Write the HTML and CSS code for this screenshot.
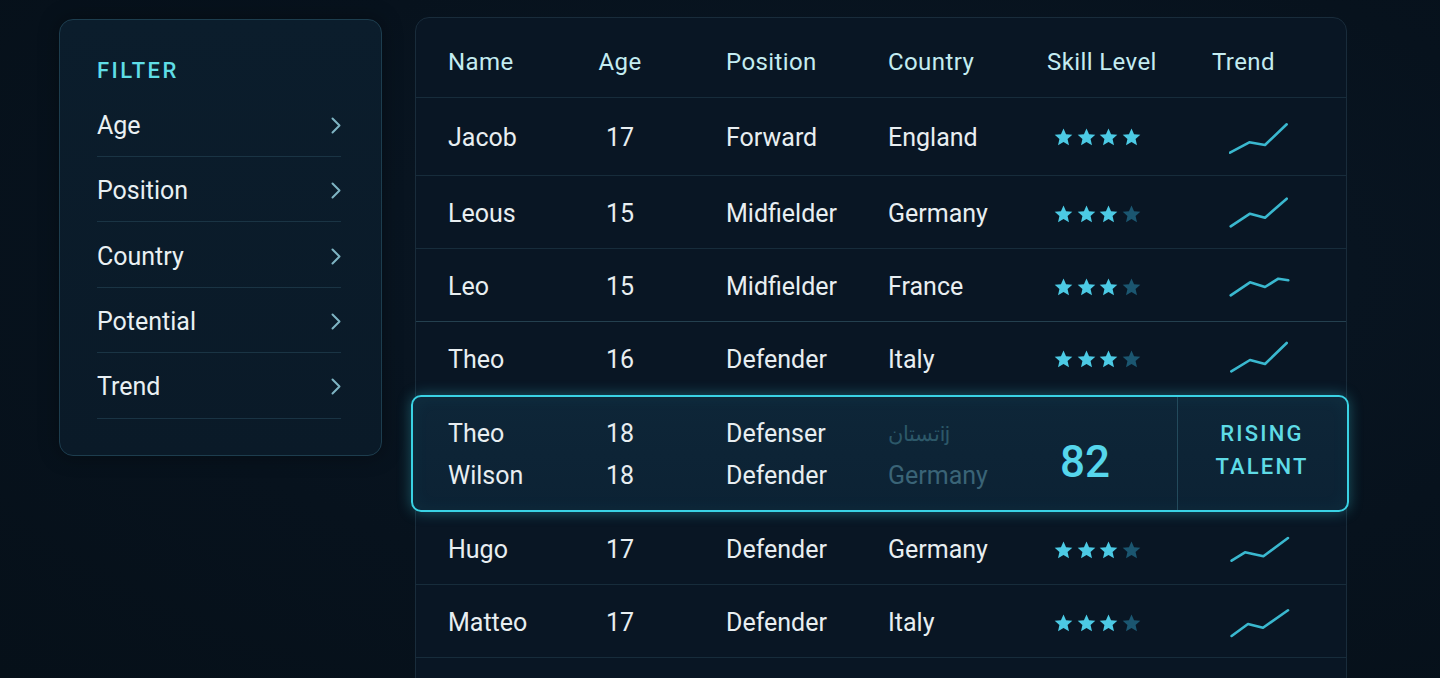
FILE: index.html
```html
<!DOCTYPE html>
<html lang="en">
<head>
<meta charset="utf-8">
<title>Scouting Table</title>
<link rel="stylesheet" href="styles.css">
</head>
<body>
<svg width="0" height="0" class="defs" aria-hidden="true">
  <defs>
    <symbol id="star" viewBox="0 0 20 19">
      <polygon points="10,0.5 12.7,6.6 19.3,7.1 14.3,11.5 15.8,18.2 10,14.7 4.2,18.2 5.7,11.5 0.7,7.1 7.3,6.6"/>
    </symbol>
    <symbol id="chev" viewBox="0 0 10 17">
      <polyline points="1.5,1.5 8.5,8.5 1.5,15.5" fill="none" stroke="currentColor" stroke-width="2" stroke-linecap="round" stroke-linejoin="round"/>
    </symbol>
  </defs>
</svg>
<div class="page">
  <aside class="filter">
    <h2 class="filter-title">FILTER</h2>
    <ul class="filter-list">
      <li class="filter-item"><span>Age</span><svg class="chev"><use href="#chev"/></svg></li>
      <li class="filter-item"><span>Position</span><svg class="chev"><use href="#chev"/></svg></li>
      <li class="filter-item"><span>Country</span><svg class="chev"><use href="#chev"/></svg></li>
      <li class="filter-item"><span>Potential</span><svg class="chev"><use href="#chev"/></svg></li>
      <li class="filter-item"><span>Trend</span><svg class="chev"><use href="#chev"/></svg></li>
    </ul>
  </aside>

  <section class="table">
    <div class="row head">
      <div class="c-name">Name</div>
      <div class="c-age">Age</div>
      <div class="c-pos">Position</div>
      <div class="c-country">Country</div>
      <div class="c-skill">Skill Level</div>
      <div class="c-trend">Trend</div>
    </div>

    <div class="row first">
      <div class="c-name">Jacob</div>
      <div class="c-age">17</div>
      <div class="c-pos">Forward</div>
      <div class="c-country">England</div>
      <div class="c-skill stars"><svg class="star on"><use href="#star"/></svg><svg class="star on"><use href="#star"/></svg><svg class="star on"><use href="#star"/></svg><svg class="star on"><use href="#star"/></svg></div>
      <div class="c-trend"><svg class="spark" viewBox="0 0 62 36"><polyline points="1,33.7 20.3,23.3 36,26 57.7,5.3"/></svg></div>
    </div>

    <div class="row">
      <div class="c-name">Leous</div>
      <div class="c-age">15</div>
      <div class="c-pos">Midfielder</div>
      <div class="c-country">Germany</div>
      <div class="c-skill stars"><svg class="star on"><use href="#star"/></svg><svg class="star on"><use href="#star"/></svg><svg class="star on"><use href="#star"/></svg><svg class="star off"><use href="#star"/></svg></div>
      <div class="c-trend"><svg class="spark" viewBox="0 0 62 36"><polyline points="1.7,30.3 21,17.7 36,21.7 57.7,2.7"/></svg></div>
    </div>

    <div class="row bright-line">
      <div class="c-name">Leo</div>
      <div class="c-age">15</div>
      <div class="c-pos">Midfielder</div>
      <div class="c-country">France</div>
      <div class="c-skill stars"><svg class="star on"><use href="#star"/></svg><svg class="star on"><use href="#star"/></svg><svg class="star on"><use href="#star"/></svg><svg class="star off"><use href="#star"/></svg></div>
      <div class="c-trend"><svg class="spark" viewBox="0 0 62 36"><polyline points="1.7,26.3 21,13.3 36,18 49.3,9.7 59.3,11.3"/></svg></div>
    </div>

    <div class="row no-line">
      <div class="c-name">Theo</div>
      <div class="c-age">16</div>
      <div class="c-pos">Defender</div>
      <div class="c-country">Italy</div>
      <div class="c-skill stars"><svg class="star on"><use href="#star"/></svg><svg class="star on"><use href="#star"/></svg><svg class="star on"><use href="#star"/></svg><svg class="star off"><use href="#star"/></svg></div>
      <div class="c-trend"><svg class="spark" viewBox="0 0 62 36"><polyline points="2.3,30.3 21,19 36,23 57.7,2"/></svg></div>
    </div>

    <div class="row highlight">
      <div class="c-name stack"><span>Theo</span><span>Wilson</span></div>
      <div class="c-age stack"><span>18</span><span>18</span></div>
      <div class="c-pos stack"><span>Defenser</span><span>Defender</span></div>
      <div class="c-country stack dim"><span class="garble">تستانij</span><span>Germany</span></div>
      <div class="c-skill score">82</div>
      <div class="c-trend badge"><span>RISING</span><span>TALENT</span></div>
    </div>

    <div class="row">
      <div class="c-name">Hugo</div>
      <div class="c-age">17</div>
      <div class="c-pos">Defender</div>
      <div class="c-country">Germany</div>
      <div class="c-skill stars"><svg class="star on"><use href="#star"/></svg><svg class="star on"><use href="#star"/></svg><svg class="star on"><use href="#star"/></svg><svg class="star off"><use href="#star"/></svg></div>
      <div class="c-trend"><svg class="spark" viewBox="0 0 62 36"><polyline points="2.6,28.7 16,20.3 34.4,24.3 59,6"/></svg></div>
    </div>

    <div class="row">
      <div class="c-name">Matteo</div>
      <div class="c-age">17</div>
      <div class="c-pos">Defender</div>
      <div class="c-country">Italy</div>
      <div class="c-skill stars"><svg class="star on"><use href="#star"/></svg><svg class="star on"><use href="#star"/></svg><svg class="star on"><use href="#star"/></svg><svg class="star off"><use href="#star"/></svg></div>
      <div class="c-trend"><svg class="spark" viewBox="0 0 62 36"><polyline points="2.6,31 19,19 34,22.7 59,5.3"/></svg></div>
    </div>

    <div class="row empty"></div>
  </section>
</div>
</body>
</html>
```

FILE: styles.css
```css
* { box-sizing: border-box; }

html, body {
  margin: 0;
  height: 100%;
  overflow: hidden;
}

body {
  background: radial-gradient(ellipse at 60% 40%, #0a1826 0%, #07121d 60%, #061019 100%);
  font-family: Roboto, "Liberation Sans", sans-serif;
  color: #e6eef2;
}

.defs { position: absolute; }

.page {
  display: flex;
  align-items: flex-start;
  gap: 33px;
  padding: 17px 0 0 59px;
}

/* Filter panel */
.filter {
  width: 323px;
  height: 437px;
  margin-top: 2px;
  border: 1.5px solid #1d3d4e;
  border-radius: 14px;
  background: linear-gradient(180deg, #0b1d2c 0%, #0a1a28 100%);
  padding: 37px 40px 0 37px;
  box-shadow: 0 0 20px rgba(0, 0, 0, 0.35);
}

.filter-title {
  margin: 0;
  font-size: 22px;
  line-height: 28px;
  font-weight: 500;
  letter-spacing: 2.4px;
  color: #5fdde6;
}

.filter-list {
  list-style: none;
  margin: 6px 0 0;
  padding: 0;
}

.filter-item {
  display: flex;
  align-items: center;
  justify-content: space-between;
  height: 65.6px;
  padding-top: 4px;
  border-bottom: 1px solid #1a3444;
  font-size: 25px;
  color: #e9f0f3;
}

.filter-item:nth-child(n+4) { padding-top: 2px; }

.chev {
  width: 10px;
  height: 17px;
  color: #7eb4c3;
}

/* Table */
.table {
  width: 932px;
  height: 720px;
  border: 1px solid #192c3b;
  border-radius: 14px;
  background: #091624;
}

.row {
  display: grid;
  grid-template-columns: 112px 120px 208px 159px 130px 1fr;
  align-items: center;
  height: 73px;
  padding-left: 32px;
  padding-top: 3px;
  border-bottom: 1px solid #172c3b;
  font-size: 25px;
  color: #e8eef1;
}

.row.head {
  height: 80px;
  padding-top: 30px;
  padding-bottom: 21px;
  align-items: center;
  font-size: 24px;
  letter-spacing: 0.4px;
  color: #c4ecf1;
}

.row.first { height: 78px; padding-top: 1px; }
.row.bright-line { border-bottom-color: #24404f; }
.row.no-line { border-bottom-color: transparent; padding-top: 2px; }

.c-age { text-align: center; }
.c-pos { padding-left: 46px; }
.stars {
  padding-left: 7px;
  display: flex;
  gap: 3.5px;
}
.head .c-skill { padding-left: 0; }
.head .c-trend { padding-left: 35px; }

.star { width: 19px; height: 18px; }
.star.on { fill: #4ccae4; }
.star.off { fill: #1b5670; }

.c-trend { padding-left: 52px; display: flex; }
.spark {
  width: 62px;
  height: 36px;
  fill: none;
  stroke: #3ab8cf;
  stroke-width: 2.6;
  stroke-linecap: round;
  stroke-linejoin: round;
}

/* highlighted row */
.row.highlight {
  height: 117px;
  margin: 0 -3px 0 -5px;
  padding-left: 35px;
  padding-top: 3px;
  border: 2px solid #3ad2e4;
  border-radius: 10px;
  background: linear-gradient(180deg, #0e2638 0%, #0c2234 100%);
  box-shadow: 0 0 14px rgba(58, 210, 228, 0.35), inset 0 0 18px rgba(58, 210, 228, 0.06);
  align-items: stretch;
}

.stack {
  display: flex;
  flex-direction: column;
  justify-content: center;
  line-height: 42px;
}

.dim { color: #3a6477; }
.garble {
  font-size: 21px;
  color: #2c5869;
  line-height: 42px;
}

.score {
  display: flex;
  align-items: center;
  padding-left: 13px;
  padding-top: 13px;
  font-size: 44px;
  font-weight: 500;
  color: #56d6ec;
}

.badge {
  border-left: 1px solid #234a5c;
  margin-top: -3px;
  padding: 0 0 7px;
  display: flex;
  flex-direction: column;
  align-items: center;
  justify-content: center;
  font-size: 22px;
  font-weight: 500;
  letter-spacing: 2.2px;
  line-height: 33px;
  color: #5fdbe6;
  margin-right: 1px;
}

.row.empty { border-bottom: none; }
```
